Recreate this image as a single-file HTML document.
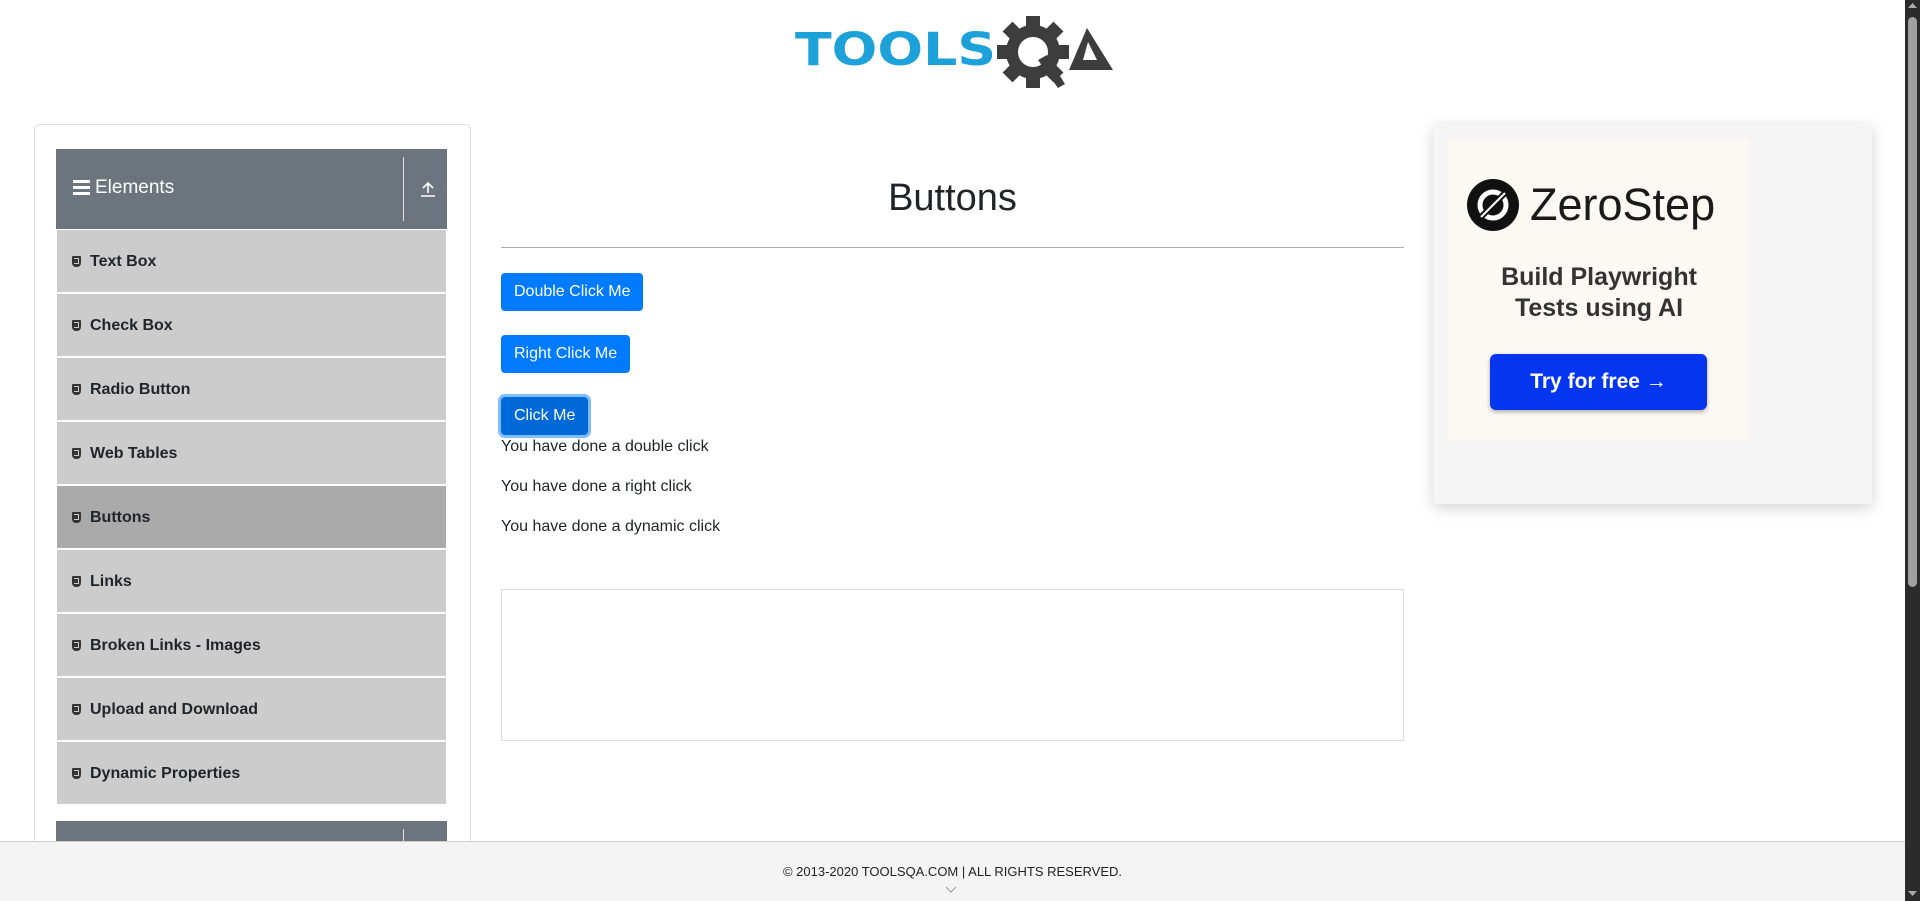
<!DOCTYPE html>
<html><head><meta charset="utf-8"><style>
*{box-sizing:border-box;margin:0;padding:0}
html,body{width:1920px;height:901px;overflow:hidden;background:#fff;font-family:"Liberation Sans",Arial,sans-serif;color:#212529;position:relative}
.abs{position:absolute}
.card{left:34px;top:124px;width:437px;height:777px;border:1px solid #ddd;border-bottom:none;border-radius:6px 6px 0 0}
.ghead{left:56px;width:391px;height:80px;background:#6c757d;color:#fff}
.ghead .t{position:absolute;left:39px;top:28px;font-size:19px}
.ghead .vl{position:absolute;left:347px;top:8px;width:1px;height:64px;background:#ddd}
.item{left:57px;width:389px;height:62px;background:#ccc;font-weight:bold;font-size:16px;color:#212529}
.item span{position:absolute;left:33px;top:23px}
.item i{position:absolute;left:15px;top:26px;width:9px;height:11px;background:#333;border-radius:1px 1px 4px 4px}
.item i:after{content:"";position:absolute;left:2px;top:2px;width:5px;height:6px;border:1px solid #ccc;border-left:none;box-sizing:border-box}
.btn{left:501px;height:38px;background:#007bff;color:#fff;font-size:16px;line-height:38px;padding:0 13px;border-radius:4px}
.msg{left:501px;font-size:16px}
</style></head><body>
<!-- logo -->
<div class="abs" style="left:795px;top:24px;font-weight:bold;font-size:48px;color:#1da1d9;letter-spacing:0px;transform:scale(1.12,0.95);transform-origin:left top;line-height:54px;font-family:'DejaVu Sans',sans-serif">TOOLS</div>
<svg class="abs" style="left:985px;top:12px" width="130" height="80" viewBox="0 0 130 80">
<g fill="#3d3d3d"><circle cx="48" cy="40" r="27"/>
<g transform="translate(48 40)"><rect x="-7" y="-36" width="14" height="72"/><rect x="-7" y="-36" width="14" height="72" transform="rotate(45)"/><rect x="-7" y="-36" width="14" height="72" transform="rotate(90)"/><rect x="-7" y="-36" width="14" height="72" transform="rotate(135)"/></g>
<circle cx="48" cy="40" r="15" fill="#fff"/>
<path d="M53 48 L62 43 L80 72 L73 76 Z"/>
<path d="M84 58 L102 16 L128 58 Z M98 48 L112 48 L103 30 Z" fill-rule="evenodd"/></g>
</svg>
<!-- sidebar -->
<div class="abs card"></div>
<div class="abs ghead" style="top:149px"><svg class="abs" style="left:17px;top:31px" width="17" height="15"><rect y="0" width="17" height="3" fill="#fff"/><rect y="6" width="17" height="3" fill="#fff"/><rect y="12" width="17" height="3" fill="#fff"/></svg><div class="t">Elements</div><div class="vl"></div><svg class="abs" style="left:364px;top:32px" width="16" height="16"><path d="M8 2 V12 M3 7 L8 2 L13 7 M1 15 H15" stroke="#fff" stroke-width="1.6" fill="none"/></svg></div>
<div class="abs item" style="top:230px"><i></i><span>Text Box</span></div>
<div class="abs item" style="top:294px"><i></i><span>Check Box</span></div>
<div class="abs item" style="top:358px"><i></i><span>Radio Button</span></div>
<div class="abs item" style="top:422px"><i></i><span>Web Tables</span></div>
<div class="abs item" style="top:486px;background:#aaa"><i></i><span>Buttons</span></div>
<div class="abs item" style="top:550px"><i></i><span>Links</span></div>
<div class="abs item" style="top:614px"><i></i><span>Broken Links - Images</span></div>
<div class="abs item" style="top:678px"><i></i><span>Upload and Download</span></div>
<div class="abs item" style="top:742px"><i></i><span>Dynamic Properties</span></div>
<div class="abs ghead" style="top:821px;height:80px"><div class="vl"></div></div>
<!-- main -->
<div class="abs" style="left:501px;width:903px;top:177px;text-align:center;font-size:38px">Buttons</div>
<div class="abs" style="left:501px;width:903px;top:247px;height:1px;background:#aaa"></div>
<div class="abs btn" style="top:273px">Double Click Me</div>
<div class="abs btn" style="top:335px">Right Click Me</div>
<div class="abs btn" style="top:397px;background:#0069d9;box-shadow:0 0 0 3px #80bdff">Click Me</div>
<div class="abs msg" style="top:438px">You have done a double click</div>
<div class="abs msg" style="top:478px">You have done a right click</div>
<div class="abs msg" style="top:518px">You have done a dynamic click</div>
<div class="abs" style="left:501px;top:589px;width:903px;height:152px;border:1px solid #ddd"></div>
<!-- ad -->
<div class="abs" style="left:1434px;top:124px;width:438px;height:380px;background:#f5f5f5;box-shadow:0 4px 14px rgba(0,0,0,.18)"></div>
<div class="abs" style="left:1449px;top:139px;width:300px;height:300px;background:#fcf8f3"></div>
<svg class="abs" style="left:1466px;top:178px" width="54" height="54"><circle cx="27" cy="27" r="26" fill="#111"/><circle cx="27" cy="27" r="13" fill="none" stroke="#fff" stroke-width="5"/><path d="M14 40 L40 14" stroke="#111" stroke-width="6"/><path d="M15 39 L39 15" stroke="#fff" stroke-width="2"/></svg>
<div class="abs" style="left:1530px;top:179px;font-size:45px;color:#1a1a1a">ZeroStep</div>
<div class="abs" style="left:1449px;width:300px;top:262px;text-align:center;font-size:25px;font-weight:bold;line-height:31px;color:#333">Build Playwright<br>Tests using AI</div>
<div class="abs" style="left:1490px;top:354px;width:217px;height:56px;background:#0436f0;border-radius:6px;color:#fff;font-weight:bold;font-size:21px;text-align:center;line-height:56px;box-shadow:0 2px 4px rgba(0,0,0,.3)">Try for free →</div>
<!-- footer -->
<div class="abs" style="left:0;top:841px;width:1905px;height:60px;background:#f4f4f4;border-top:1px solid #ccc;z-index:5"></div>
<div class="abs" style="left:0;width:1905px;top:864px;text-align:center;font-size:13px;color:#222;z-index:6">© 2013-2020 TOOLSQA.COM | ALL RIGHTS RESERVED.</div>
<svg class="abs" style="left:945px;top:886px;z-index:6" width="12" height="8"><path d="M1 1 L6 6 L11 1" stroke="#999" fill="none"/></svg>
<!-- scrollbar -->
<div class="abs" style="left:1905px;top:0;width:15px;height:901px;background:#2b2b2b;z-index:7"></div>
<div class="abs" style="left:1908px;top:17px;width:9px;height:570px;background:#a0a0a0;border-radius:5px;z-index:8"></div>
<svg class="abs" style="left:1907px;top:2px;z-index:8" width="11" height="8"><path d="M1 6 L5.5 1 L10 6 Z" fill="#aaa"/></svg>
<svg class="abs" style="left:1907px;top:890px;z-index:8" width="11" height="8"><path d="M1 1 L5.5 6 L10 1 Z" fill="#aaa"/></svg>
</body></html>
